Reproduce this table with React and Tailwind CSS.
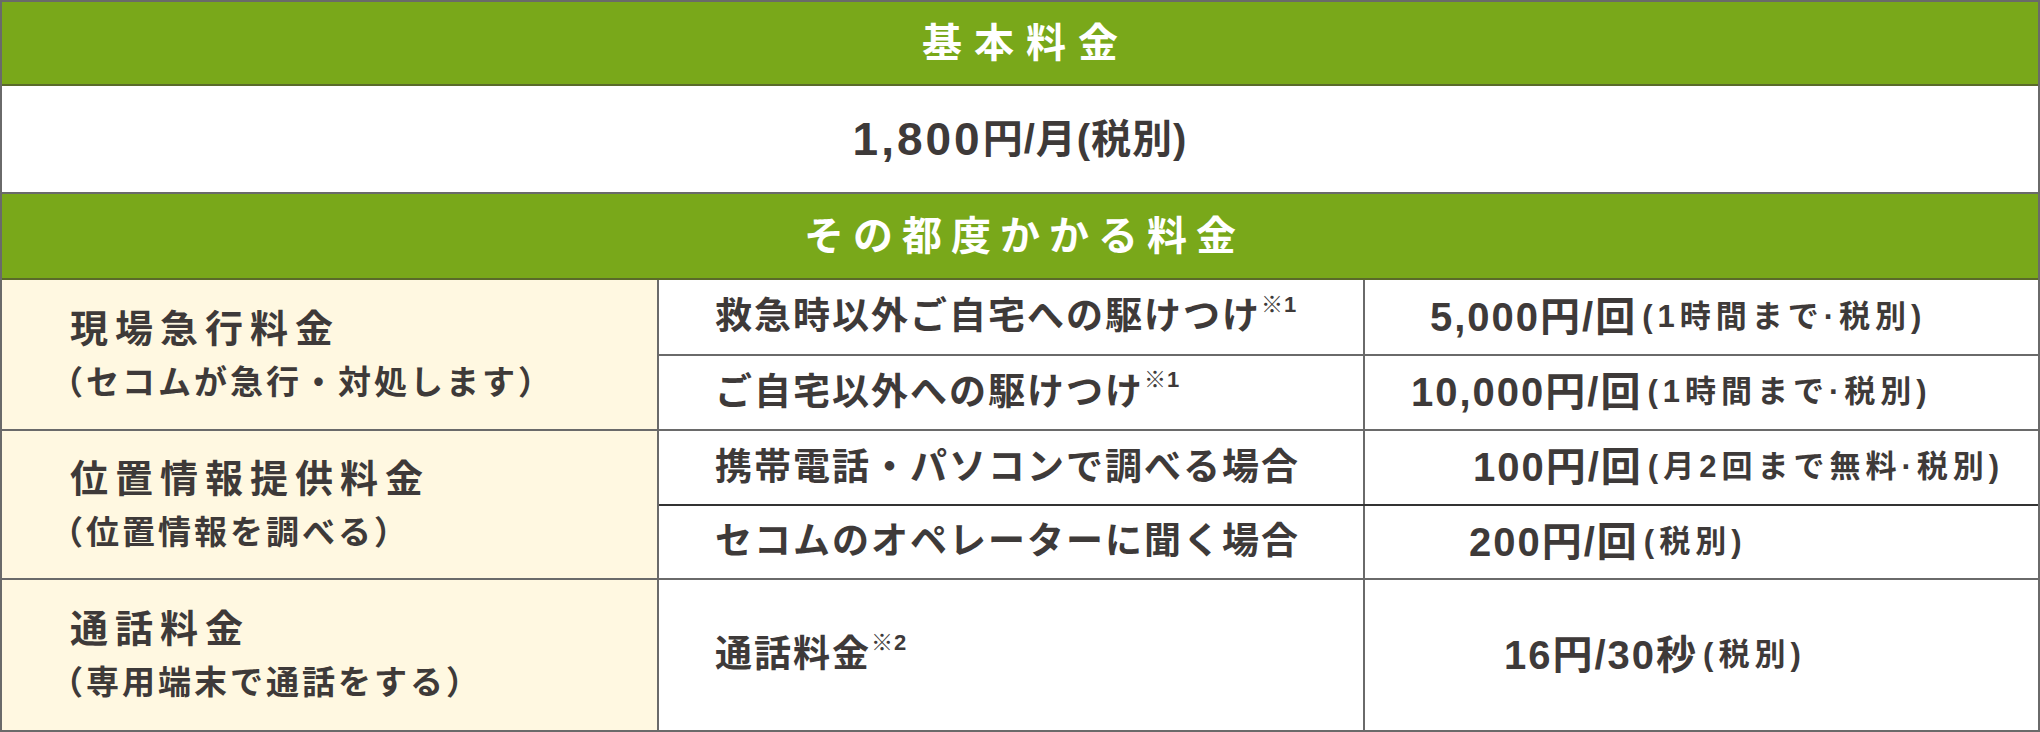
import React from "react";

const BORDER = "border-[#6a6a6a]";

function LeftCell({ title, sub }) {
  return (
    <div className={`w-[657px] shrink-0 bg-[#fff8e1] border-r-2 ${BORDER} flex flex-col justify-center pl-[68px]`}>
      <div className="text-[38px] leading-[44px] tracking-[7px]">{title}</div>
      <div className="text-[33px] leading-[40px] tracking-[3px] mt-[12px] -ml-[20px]">{sub}</div>
    </div>
  );
}

function Mid({ children }) {
  return (
    <div className={`w-[706px] shrink-0 border-r-2 ${BORDER} flex items-center pl-[56px] text-[37px] tracking-[2px] whitespace-nowrap`}>
      {children}
    </div>
  );
}

function Note({ n }) {
  return <sup className="text-[22px] top-[-12px] tracking-[1px]">※{n}</sup>;
}

function Price({ main, note, pl }) {
  return (
    <div className={`flex-1 flex items-center ${pl} whitespace-nowrap`}>
      <span className="text-[40px] tracking-[2px]">{main}</span>
      <span className="text-[31px] tracking-[5px] ml-[5px]">{note}</span>
    </div>
  );
}

export default function App() {
  return (
    <div
      className={`w-[2040px] h-[732px] bg-white border-2 ${BORDER} flex flex-col font-bold text-[#3e3a39] font-['Liberation_Sans','Noto_Sans_CJK_JP',sans-serif]`}
    >
      <div className="h-[84px] shrink-0 bg-[#79a81a] border-b-2 border-[#5a6a2a] flex items-center justify-center text-white text-[40px] tracking-[12px] pl-[12px]">
        基本料金
      </div>
      <div className={`h-[108px] shrink-0 border-b-2 ${BORDER} flex items-center justify-center whitespace-nowrap`}>
        <span className="text-[46px] tracking-[3px]">1,800</span>
        <span className="text-[40px] tracking-[1px]">円/月(税別)</span>
      </div>
      <div className="h-[86px] shrink-0 bg-[#79a81a] border-b-2 border-[#5a6a2a] flex items-center justify-center text-white text-[40px] tracking-[9px] pl-[9px]">
        その都度かかる料金
      </div>

      {/* Row 1 */}
      <div className={`h-[151px] shrink-0 flex border-b-2 ${BORDER}`}>
        <LeftCell title="現場急行料金" sub="（セコムが急行・対処します）" />
        <div className="flex-1 flex flex-col">
          <div className={`flex-1 flex border-b-2 ${BORDER}`}>
            <Mid>
              救急時以外ご自宅への駆けつけ
              <Note n="1" />
            </Mid>
            <Price main="5,000円/回" note="(1時間まで·税別)" pl="pl-[65px]" />
          </div>
          <div className="flex-1 flex">
            <Mid>
              ご自宅以外への駆けつけ
              <Note n="1" />
            </Mid>
            <Price main="10,000円/回" note="(1時間まで·税別)" pl="pl-[46px]" />
          </div>
        </div>
      </div>

      {/* Row 2 */}
      <div className={`h-[149px] shrink-0 flex border-b-2 ${BORDER}`}>
        <LeftCell title="位置情報提供料金" sub="（位置情報を調べる）" />
        <div className="flex-1 flex flex-col">
          <div className="flex-1 flex border-b-2 border-[#333]">
            <Mid>携帯電話・パソコンで調べる場合</Mid>
            <Price main="100円/回" note="(月2回まで無料·税別)" pl="pl-[108px]" />
          </div>
          <div className="flex-1 flex">
            <Mid>セコムのオペレーターに聞く場合</Mid>
            <Price main="200円/回" note="(税別)" pl="pl-[104px]" />
          </div>
        </div>
      </div>

      {/* Row 3 */}
      <div className="flex-1 flex">
        <LeftCell title="通話料金" sub="（専用端末で通話をする）" />
        <div className="flex-1 flex">
          <Mid>
            通話料金
            <Note n="2" />
          </Mid>
          <Price main="16円/30秒" note="(税別)" pl="pl-[139px]" />
        </div>
      </div>
    </div>
  );
}
